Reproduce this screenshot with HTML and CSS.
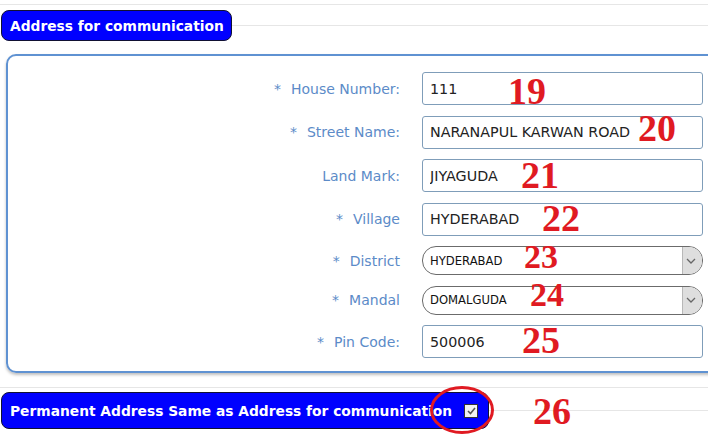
FILE: index.html
```html
<!DOCTYPE html>
<html lang="en">
<head>
  <meta charset="UTF-8" />
  <meta name="viewport" content="width=device-width, initial-scale=1" />
  <title>Address for communication</title>
  <link rel="stylesheet" href="styles.css">
</head>
<body>

  <div class="page">

    <div class="legend-row top">
      <div class="legend">Address for communication</div>
      <div class="legend-line"></div>
    </div>

    <div class="address-box">
      <div class="form-grid">
        <label class="lbl"><span class="req">*</span>House Number:</label>
        <input class="txt" type="text" value="111">

        <label class="lbl"><span class="req">*</span>Street Name:</label>
        <input class="txt" type="text" value="NARANAPUL KARWAN ROAD">

        <label class="lbl">Land Mark:</label>
        <input class="txt" type="text" value="JIYAGUDA">

        <label class="lbl"><span class="req">*</span>Village</label>
        <input class="txt" type="text" value="HYDERABAD">

        <label class="lbl"><span class="req">*</span>District</label>
        <div class="select">
          <span class="select-value">HYDERABAD</span>
          <span class="select-arrow">
            <svg width="10" height="6" viewBox="0 0 10 6"><path d="M1 1 L5 5 L9 1" fill="none" stroke="#666" stroke-width="1.3"/></svg>
          </span>
        </div>

        <label class="lbl"><span class="req">*</span>Mandal</label>
        <div class="select">
          <span class="select-value">DOMALGUDA</span>
          <span class="select-arrow">
            <svg width="10" height="6" viewBox="0 0 10 6"><path d="M1 1 L5 5 L9 1" fill="none" stroke="#666" stroke-width="1.3"/></svg>
          </span>
        </div>

        <label class="lbl"><span class="req">*</span>Pin Code:</label>
        <input class="txt" type="text" value="500006">
      </div>
    </div>

    <div class="legend-row bottom">
      <div class="legend wide">
        Permanent Address Same as Address for communication
        <span class="check">
          <svg width="9" height="8" viewBox="0 0 9 8"><path d="M1 4 L3.5 6.5 L8 1" fill="none" stroke="#555" stroke-width="1.6"/></svg>
        </span>
      </div>
      <div class="legend-line"></div>
    </div>

    <!-- annotations drawn over the screenshot -->
    <span class="mark m19">19</span>
    <span class="mark m20">20</span>
    <span class="mark m21">21</span>
    <span class="mark m22">22</span>
    <span class="mark small m23">23</span>
    <span class="mark small m24">24</span>
    <span class="mark m25">25</span>
    <span class="mark m26">26</span>
    <svg class="ring" width="66" height="50" viewBox="0 0 66 50">
      <ellipse cx="33" cy="25" rx="30.5" ry="22.5" fill="none" stroke="#e01a22" stroke-width="3"/>
    </svg>

  </div>

</body>
</html>
```

FILE: styles.css
```css
* {
  margin: 0;
  padding: 0;
  box-sizing: border-box;
}

html, body {
  width: 100%;
  height: 100%;
  overflow: hidden;
  background: #fff;
  font-family: "DejaVu Sans", Verdana, sans-serif;
}

.page {
  position: relative;
  width: 708px;
  height: 437px;
  overflow: hidden;
}

/* legend rows */
.legend-row {
  display: flex;
  align-items: center;
  border-top: 1px solid #e6e6e6;
}

.legend-row.top {
  margin-top: 4px;
  padding-top: 5px;
}

.legend-row.bottom {
  margin-top: 14px;
  padding-top: 4px;
}

.legend {
  flex: none;
  margin-left: 1px;
  height: 31px;
  padding: 0 7px 0 8px;
  display: flex;
  align-items: center;
  white-space: nowrap;
  background: #0000ff;
  color: #fff;
  font-size: 13.8px;
  font-weight: bold;
  border: 1px solid #111133;
  border-radius: 8px;
}

.legend.wide {
  height: 37px;
  padding-right: 10px;
  gap: 12px;
}

.legend-line {
  flex: 1;
  height: 1px;
  background: #e6e6e6;
}

.check {
  width: 14px;
  height: 14px;
  background: #f2f2f2;
  border: 1px solid #333;
  display: flex;
  align-items: center;
  justify-content: center;
}

/* address box */
.address-box {
  margin-top: 13px;
  margin-left: 6px;
  width: 730px;
  border: 2px solid #5f92d2;
  border-radius: 10px;
  padding: 16px 0 13px 0;
  box-shadow: 0 2px 3px rgba(0,0,0,0.25);
}

.form-grid {
  display: grid;
  grid-template-columns: 392px 281px;
  column-gap: 22px;
  row-gap: 10.5px;
  align-items: center;
}

.lbl {
  text-align: right;
  font-size: 14px;
  color: #5c8bc8;
}

.req {
  margin-right: 10px;
}

.txt {
  height: 33px;
  width: 281px;
  border: 1px solid #7f9db9;
  border-radius: 3px;
  padding: 0 7px;
  font-family: "DejaVu Sans", Verdana, sans-serif;
  font-size: 14.3px;
  color: #222;
  background: #fff;
  outline: none;
}

.select {
  height: 29px;
  width: 281px;
  border: 1px solid #6b6b6b;
  border-radius: 14px;
  overflow: hidden;
  display: flex;
  align-items: center;
  background: #fff;
}

.select-value {
  flex: 1;
  padding-left: 7px;
  font-size: 11.6px;
  color: #111;
}

.select-arrow {
  width: 20px;
  height: 100%;
  background: #dedede;
  border-left: 1px solid #b8b8b8;
  display: flex;
  align-items: center;
  justify-content: center;
  padding-right: 3px;
}

/* red annotations */
.mark {
  position: absolute;
  font-family: "Liberation Serif", "Times New Roman", serif;
  font-weight: bold;
  font-size: 38px;
  line-height: 30px;
  color: #e01a22;
}

.mark.small {
  font-size: 34px;
}

.m19 { left: 508px; top: 76px; }
.m20 { left: 638px; top: 113px; }
.m21 { left: 521px; top: 160px; }
.m22 { left: 542px; top: 203px; }
.m23 { left: 524px; top: 241.5px; }
.m24 { left: 530px; top: 279.5px; }
.m25 { left: 522px; top: 325px; }
.m26 { left: 533px; top: 396px; }

.ring {
  position: absolute;
  left: 429px;
  top: 385px;
}
```
